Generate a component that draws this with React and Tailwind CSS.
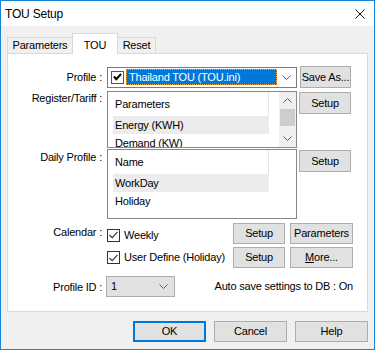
import React from 'react'

const font = "font-['Liberation_Sans',Arial,sans-serif]"

const Chevron = ({ className = '' }) => (
  <svg width="9" height="5" viewBox="0 0 9 5" className={className}>
    <path d="M0.5 0.5 L4.5 4.5 L8.5 0.5" fill="none" stroke="#606060" strokeWidth="1" />
  </svg>
)

const ChevronUp = () => (
  <svg width="9" height="5" viewBox="0 0 9 5">
    <path d="M0.5 4.5 L4.5 0.5 L8.5 4.5" fill="none" stroke="#606060" strokeWidth="1" />
  </svg>
)

const Button = ({ children, className = '' }) => (
  <div
    className={`flex items-center justify-center whitespace-nowrap bg-[#e1e1e1] leading-none ${className}`}
  >
    {children}
  </div>
)

const CheckBox = () => (
  <div className="w-[13px] h-[13px] border border-[#333] bg-white flex items-center justify-center">
    <svg width="9" height="8" viewBox="0 0 9 8">
      <path d="M0.5 4 L3.2 6.7 L8.5 0.8" fill="none" stroke="#333" strokeWidth="1.1" />
    </svg>
  </div>
)

const Label = ({ children, className = '' }) => (
  <div className={`w-[94px] shrink-0 text-right leading-[14px] whitespace-nowrap ${className}`}>{children}</div>
)

const ListView = ({ header, rows, height, scroll }) => (
  <div className={`ml-[5px] w-[190px] ${height} border border-[#828790] bg-white flex overflow-hidden`}>
    <div className="flex-1 flex flex-col">
      <div className="h-[24px] shrink-0 flex">
        <div className="w-[161px] border-r border-[#e5e5e5] pl-[7px] flex items-center">{header}</div>
      </div>
      {rows.map((r, i) => (
        <div
          key={r}
          className={`ml-[5px] w-[156px] h-[18px] shrink-0 pl-[2px] flex items-center ${i === 0 ? 'bg-[#ececec]' : ''}`}
        >
          {r}
        </div>
      ))}
    </div>
    {scroll && (
      <div className="w-[17px] bg-[#f0f0f0] flex flex-col items-center">
        <div className="h-[17px] flex items-center justify-center">
          <ChevronUp />
        </div>
        <div className="w-[15px] h-[17px] bg-[#cdcdcd]" />
        <div className="flex-1" />
        <div className="h-[17px] flex items-center justify-center">
          <Chevron />
        </div>
      </div>
    )}
  </div>
)

const App = () => {
  return (
    <div
      className={`w-[375px] h-[350px] bg-[#f0f0f0] border border-[#1883d7] flex flex-col text-[11px] tracking-[-0.2px] text-black ${font}`}
    >
      <div className="h-[25px] shrink-0 bg-white flex items-center justify-between pl-[4px] pr-[9px]">
        <span className="text-[12px]">TOU Setup</span>
        <svg width="10" height="10" viewBox="0 0 10 10">
          <path d="M0.5 0.5 L9.5 9.5 M9.5 0.5 L0.5 9.5" stroke="#111" strokeWidth="1" />
        </svg>
      </div>

      <div className="px-[6px] pt-[7px]">
        <div className="flex items-end h-[20px]">
          <div className="w-[65px] h-[16px] border-t border-l border-[#d9d9d9] flex items-center justify-center">
            Parameters
          </div>
          <div className="w-[46px] h-[21px] -mb-px relative z-10 bg-white border-t border-l border-r border-[#d9d9d9] flex items-start pt-[3px] justify-center">
            TOU
          </div>
          <div className="w-[38px] h-[16px] border-t border-r border-[#d9d9d9] flex items-center justify-center">
            Reset
          </div>
        </div>

        <div className="h-[259px] border border-[#d9d9d9] bg-white pt-[12px] flex flex-col">
          {/* Profile */}
          <div className="flex items-center">
            <Label>Profile :</Label>
            <div className="ml-[5px] w-[190px] h-[21px] border border-[#7a7a7a] bg-white flex items-center pl-[3px]">
              <div className="w-[13px] h-[13px] border border-[#555] bg-white flex items-center justify-center">
                <svg width="9" height="8" viewBox="0 0 9 8">
                  <path d="M1 3.5 L3.3 6.2 L8 1" fill="none" stroke="#000" strokeWidth="2" />
                </svg>
              </div>
              <div className="ml-[2px] w-[151px] h-[16px] bg-[#0078d7] text-white border border-dotted border-[#f7a23a] flex items-center pl-[2px]">
                Thailand TOU (TOU.ini)
              </div>
              <div className="flex-1 flex items-center justify-center">
                <Chevron />
              </div>
            </div>
            <Button className="ml-[3px] w-[51px] h-[22px] border border-[#adadad]">Save As...</Button>
          </div>

          {/* Register */}
          <div className="flex items-start mt-[3px]">
            <Label>Register/Tariff :</Label>
            <ListView
              header="Parameters"
              rows={['Energy (KWH)', 'Demand (KW)']}
              height="h-[57px]"
              scroll
            />
            <Button className="ml-[2px] mt-[1px] w-[52px] h-[22px] border border-[#adadad]">Setup</Button>
          </div>

          {/* Daily */}
          <div className="flex items-start mt-[1px]">
            <Label className="pt-[1px]">Daily Profile :</Label>
            <ListView header="Name" rows={['WorkDay', 'Holiday']} height="h-[70px]" />
            <Button className="ml-[2px] mt-[1px] w-[52px] h-[22px] border border-[#adadad]">Setup</Button>
          </div>

          {/* Calendar */}
          <div className="flex items-start mt-[4px]">
            <Label className="pt-[2px]">Calendar :</Label>
            <div className="ml-[5px] flex flex-col gap-[3px]">
              <div className="flex items-center h-[21px]">
                <div className="w-[126px] flex items-center gap-[4px] pt-[3px]">
                  <CheckBox />
                  <span>Weekly</span>
                </div>
                <Button className="w-[52px] h-[21px] border border-[#adadad]">Setup</Button>
                <Button className="ml-[5px] w-[63px] h-[21px] border border-[#adadad]">Parameters</Button>
              </div>
              <div className="flex items-center h-[21px]">
                <div className="w-[126px] flex items-center gap-[4px]">
                  <CheckBox />
                  <span className="whitespace-nowrap">User Define (Holiday)</span>
                </div>
                <Button className="w-[52px] h-[21px] border border-[#adadad]">Setup</Button>
                <Button className="ml-[5px] w-[63px] h-[21px] border border-[#adadad]">
                  <span className="underline">M</span>ore...
                </Button>
              </div>
            </div>
          </div>

          {/* Profile ID */}
          <div className="flex items-center mt-[8px] pr-[14px]">
            <Label>Profile ID :</Label>
            <div className="ml-[4px] w-[69px] h-[21px] bg-[#e1e1e1] border border-[#adadad] flex items-center justify-between pl-[4px] pr-[6px]">
              <span>1</span>
              <Chevron />
            </div>
            <div className="flex-1 text-right">Auto save settings to DB : On</div>
          </div>
        </div>
      </div>

      <div className="flex justify-end gap-[8px] px-[6px] mt-[9px]">
        <Button className="w-[73px] h-[21px] border-2 border-[#0078d7]">OK</Button>
        <Button className="w-[73px] h-[21px] border border-[#adadad]">Cancel</Button>
        <Button className="w-[73px] h-[21px] border border-[#adadad]">Help</Button>
      </div>
    </div>
  )
}

export default App
